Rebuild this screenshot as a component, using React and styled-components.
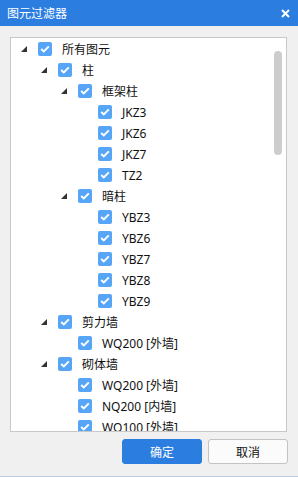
import React from 'react';
import styled, { createGlobalStyle } from 'styled-components';

const GlobalStyle = createGlobalStyle`
  html, body {
    margin: 0;
    padding: 0;
    background: #f0f0f0;
  }
  * {
    box-sizing: border-box;
  }
`;

const Window = styled.div`
  display: flex;
  flex-direction: column;
  height: 100vh;
  background: #f0f0f0;
  border-bottom: 1px solid #bccbe0;
  font-family: 'Noto Sans', 'Noto Sans CJK SC', sans-serif;
  overflow: hidden;
`;

const TitleBar = styled.div`
  display: flex;
  align-items: center;
  justify-content: space-between;
  height: 26px;
  padding: 0 8px 0 7px;
  background: #2b7edf;
  color: #ffffff;
  font-size: 12px;
  flex-shrink: 0;
`;

const CloseButton = styled.button`
  display: flex;
  align-items: center;
  justify-content: center;
  width: 10px;
  height: 10px;
  padding: 0;
  border: none;
  background: none;
  cursor: pointer;
`;

const Body = styled.div`
  display: flex;
  flex-direction: column;
  flex: 1;
  padding: 11px 10px 0 10px;
  min-height: 0;
`;

const TreeBox = styled.div`
  position: relative;
  width: 277px;
  height: 395px;
  background: #ffffff;
  border: 1px solid #c8c8c8;
  padding-top: 0.5px;
  overflow: hidden;
`;

const ScrollThumb = styled.div`
  position: absolute;
  top: 13px;
  right: 4px;
  width: 8px;
  height: 104px;
  border-radius: 4px;
  background: #cdcdcd;
`;

const Row = styled.div`
  display: flex;
  align-items: center;
  height: 21px;
  padding-left: ${(p) => p.$level * 20}px;
  font-size: 12px;
  color: #111111;
  white-space: nowrap;
`;

const Toggle = styled.div`
  display: flex;
  align-items: center;
  width: 27px;
  height: 100%;
  padding-left: 10px;
  flex-shrink: 0;
`;

const Check = styled.div`
  display: flex;
  align-items: center;
  justify-content: center;
  width: 14px;
  height: 14px;
  border-radius: 2px;
  background: #57a5f6;
  flex-shrink: 0;
`;

const Label = styled.span`
  margin-left: 10px;
  line-height: 21px;
`;

const Footer = styled.div`
  display: flex;
  justify-content: flex-end;
  gap: 6px;
  padding-top: 7px;
`;

const Button = styled.button`
  width: 80px;
  height: 25px;
  border-radius: 3px;
  font-family: inherit;
  font-size: 12px;
  cursor: pointer;
  border: 1px solid ${(p) => (p.$primary ? '#2b7edf' : '#c3c3c3')};
  background: ${(p) => (p.$primary ? '#2b7edf' : '#fbfbfb')};
  color: ${(p) => (p.$primary ? '#ffffff' : '#111111')};
`;

const tree = [
  { level: 0, label: '所有图元', open: true },
  { level: 1, label: '柱', open: true },
  { level: 2, label: '框架柱', open: true },
  { level: 3, label: 'JKZ3' },
  { level: 3, label: 'JKZ6' },
  { level: 3, label: 'JKZ7' },
  { level: 3, label: 'TZ2' },
  { level: 2, label: '暗柱', open: true },
  { level: 3, label: 'YBZ3' },
  { level: 3, label: 'YBZ6' },
  { level: 3, label: 'YBZ7' },
  { level: 3, label: 'YBZ8' },
  { level: 3, label: 'YBZ9' },
  { level: 1, label: '剪力墙', open: true },
  { level: 2, label: 'WQ200 [外墙]' },
  { level: 1, label: '砌体墙', open: true },
  { level: 2, label: 'WQ200 [外墙]' },
  { level: 2, label: 'NQ200 [内墙]' },
  { level: 2, label: 'WQ100 [外墙]' },
];

const Arrow = () => (
  <svg width="6" height="6" viewBox="0 0 6 6">
    <polygon points="6,0 6,6 0,6" fill="#333333" />
  </svg>
);

const CheckMark = () => (
  <svg width="10" height="8" viewBox="0 0 10 8">
    <polyline points="1.2,4 3.8,6.4 8.8,1.4" fill="none" stroke="#ffffff" strokeWidth="2" />
  </svg>
);

function App() {
  return (
    <>
      <GlobalStyle />
      <Window>
        <TitleBar>
          <span>图元过滤器</span>
          <CloseButton aria-label="关闭">
            <svg width="9" height="9" viewBox="0 0 9 9">
              <path d="M1 1 L8 8 M8 1 L1 8" stroke="#ffffff" strokeWidth="2" />
            </svg>
          </CloseButton>
        </TitleBar>
        <Body>
          <TreeBox>
            {tree.map((node, i) => (
              <Row key={i} $level={node.level}>
                <Toggle>{node.open && <Arrow />}</Toggle>
                <Check>
                  <CheckMark />
                </Check>
                <Label>{node.label}</Label>
              </Row>
            ))}
            <ScrollThumb />
          </TreeBox>
          <Footer>
            <Button $primary>确定</Button>
            <Button>取消</Button>
          </Footer>
        </Body>
      </Window>
    </>
  );
}

export default App;
